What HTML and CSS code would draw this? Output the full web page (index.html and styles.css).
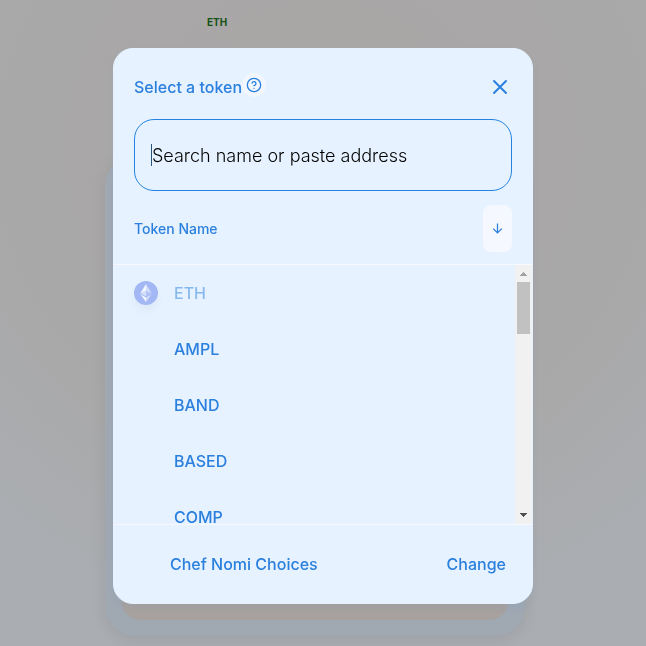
FILE: index.html
```
<!DOCTYPE html>
<html lang="en">
<head>
<meta charset="utf-8">
<meta name="viewport" content="width=device-width, initial-scale=1">
<title>Select a token</title>
<link rel="stylesheet" href="styles.css">
</head>
<body>
<div class="page">
  <header class="nav"><a class="nav-link" href="#">ETH</a></header>
  <main class="swap-card"><div class="swap-panel"></div></main>
</div>
<div class="overlay">
  <section class="modal" role="dialog" aria-labelledby="dialog-title">
    <div class="head">
      <div class="title-row">
        <div class="title-group">
          <h1 class="title" id="dialog-title">Select a token</h1>
          <button class="help" type="button" aria-label="Help">
            <svg width="16" height="16" viewBox="0 0 24 24" fill="none" stroke="currentColor" stroke-width="2" stroke-linecap="round" stroke-linejoin="round"><circle cx="12" cy="12" r="10"/><path d="M9.09 9a3 3 0 0 1 5.83 1c0 2-3 3-3 3"/><path d="M12 17h.01"/></svg>
          </button>
        </div>
        <button class="close" type="button" aria-label="Close">
          <svg width="24" height="24" viewBox="0 0 24 24" fill="none" stroke="currentColor" stroke-width="2" stroke-linecap="round"><path d="M18 6 6 18M6 6l12 12"/></svg>
        </button>
      </div>
      <div class="search-box">
        <input class="search" type="text" placeholder="Search name or paste address" aria-label="Search name or paste address">
      </div>
      <div class="sort-row">
        <span class="sort-label">Token Name</span>
        <button class="sort" type="button" aria-label="Sort descending">
          <svg width="11" height="11" viewBox="0 0 11 11" fill="none" stroke="currentColor" stroke-width="1.3"><path d="M5.5 .5v9.3M1.2 5.6l4.3 4.3 4.3-4.3"/></svg>
        </button>
      </div>
    </div>
    <div class="list-area">
      <ul class="list">
        <li><button class="token" type="button" disabled>
          <span class="token-icon eth-icon">
            <svg width="24" height="24" viewBox="0 0 24 24"><circle cx="12" cy="12" r="12" fill="#627eea"/><g fill="#fff"><path d="M12 3v6.700l5.600 2.500z" fill-opacity=".6"/><path d="M12 3 6.400 12.200 12 9.700z"/><path d="M12 16.500V21l5.600-7.800z" fill-opacity=".6"/><path d="M12 21v-4.500l-5.600-3.300z"/><path d="m12 15.400 5.600-3.200L12 9.700z" fill-opacity=".2"/><path d="m6.400 12.200 5.600 3.200V9.700z" fill-opacity=".6"/></g></svg>
          </span>ETH</button></li>
        <li><button class="token" type="button"><span class="token-icon"></span>AMPL</button></li>
        <li><button class="token" type="button"><span class="token-icon"></span>BAND</button></li>
        <li><button class="token" type="button"><span class="token-icon"></span>BASED</button></li>
        <li><button class="token" type="button"><span class="token-icon"></span>COMP</button></li>
      </ul>
      <div class="scrollbar" aria-hidden="true">
        <svg width="17" height="17" viewBox="0 0 17 17" shape-rendering="crispEdges"><path d="M5 11h7L8.500 7z" fill="#a3a3a3"/></svg>
        <div class="thumb"></div>
        <svg class="arrow-down" width="17" height="17" viewBox="0 0 17 17" shape-rendering="crispEdges"><path d="M5 6h7L8.500 10z" fill="#505050"/></svg>
      </div>
    </div>
    <footer class="foot">
      <span class="list-name">Chef Nomi Choices</span>
      <button class="change" type="button">Change</button>
    </footer>
  </section>
</div>
</body>
</html>
```

FILE: styles.css
```
* { box-sizing: border-box; }

body {
  margin: 0;
  min-height: 100vh;
  background: radial-gradient(ellipse 500px 480px at 50% 150px, #a9a5a5, #a9a8a8 60%, #aaadb1);
  color: #2b80de;
  font-family: Inter, "Liberation Sans", sans-serif;
  font-size: 16px;
  font-weight: 500;
}

button {
  display: flex;
  align-items: center;
  border: 0;
  padding: 0;
  background: none;
  color: inherit;
  font: inherit;
}

.page {
  display: flex;
  flex-direction: column;
  align-items: center;
  gap: 124px;
  min-height: 100vh;
  padding: 12px 16px 10px 0;
}

.nav {
  display: flex;
  width: 100%;
  max-width: 420px;
  padding-left: 102px;
  line-height: 20px;
}

.nav-link {
  color: #145214;
  font-size: 10px;
  font-weight: 700;
  text-decoration: none;
}

.swap-card {
  display: flex;
  flex: 1;
  width: 100%;
  max-width: 420px;
  padding: 16px;
  border-radius: 30px;
  background: #a0a8b2;
  box-shadow: 0 4px 16px rgba(0, 0, 0, 0.08);
}

.swap-panel {
  flex: 1;
  border-radius: 20px;
  background: #a7a19f;
}

.overlay {
  position: fixed;
  inset: 0;
  display: flex;
  align-items: flex-start;
  justify-content: center;
  padding-top: 48px;
}

.modal {
  width: 100%;
  max-width: 420px;
  border: 1px solid #e6f2ff;
  border-radius: 20px;
  background: #e6f2ff;
  box-shadow: 0 4px 8px rgba(47, 128, 237, 0.05);
  overflow: hidden;
}

.head {
  display: flex;
  flex-direction: column;
  gap: 14px;
  padding: 20px 20px 12px;
  border-bottom: 1px solid #f7f9ff;
}

.title-row,
.sort-row,
.foot {
  display: flex;
  align-items: center;
  justify-content: space-between;
}

.title-row { height: 36px; }

.title-group {
  display: flex;
  align-items: center;
}

.title {
  margin: 0;
  font-size: 16px;
  font-weight: 500;
}

.help {
  padding: 4px;
  margin-bottom: 4px;
  border-radius: 12px;
  background: #f2f7ff;
}

.search-box {
  display: flex;
  align-items: center;
  height: 72px;
  padding: 0 16px;
  border: 1px solid #2583de;
  border-radius: 20px;
}

.search {
  width: 100%;
  height: 22px;
  padding: 0;
  border: 0;
  border-left: 1px solid #28557f;
  outline: 0;
  background: none;
  font-family: inherit;
  font-size: 18px;
  font-weight: 300;
}

.search::placeholder {
  color: #000;
  opacity: 1;
}

.sort-label { font-size: 14px; }

.sort {
  justify-content: center;
  width: 29px;
  height: 47px;
  border-radius: 8px;
  background: #f5f8ff;
}

.list-area {
  display: flex;
  height: 259px;
}

.list {
  flex: 1;
  margin: 0;
  padding: 0;
  overflow-y: auto;
  scrollbar-width: none;
  list-style: none;
}

.token {
  gap: 16px;
  width: 100%;
  height: 56px;
  padding: 0 20px;
}

.token:disabled { opacity: 0.5; }

.token-icon {
  width: 24px;
  height: 24px;
  border-radius: 12px;
}

.token-icon svg { display: block; }

.eth-icon { box-shadow: 0 6px 10px rgba(0, 0, 0, 0.08); }

.scrollbar {
  display: flex;
  flex-direction: column;
  align-items: center;
  width: 17px;
  background: #f1f1f1;
}

.thumb {
  width: 13px;
  height: 52px;
  background: #c1c1c1;
}

.arrow-down { margin-top: auto; }

.foot {
  height: 79px;
  padding: 0 26px 0 56px;
  border-top: 1px solid #f7f9ff;
}
```
